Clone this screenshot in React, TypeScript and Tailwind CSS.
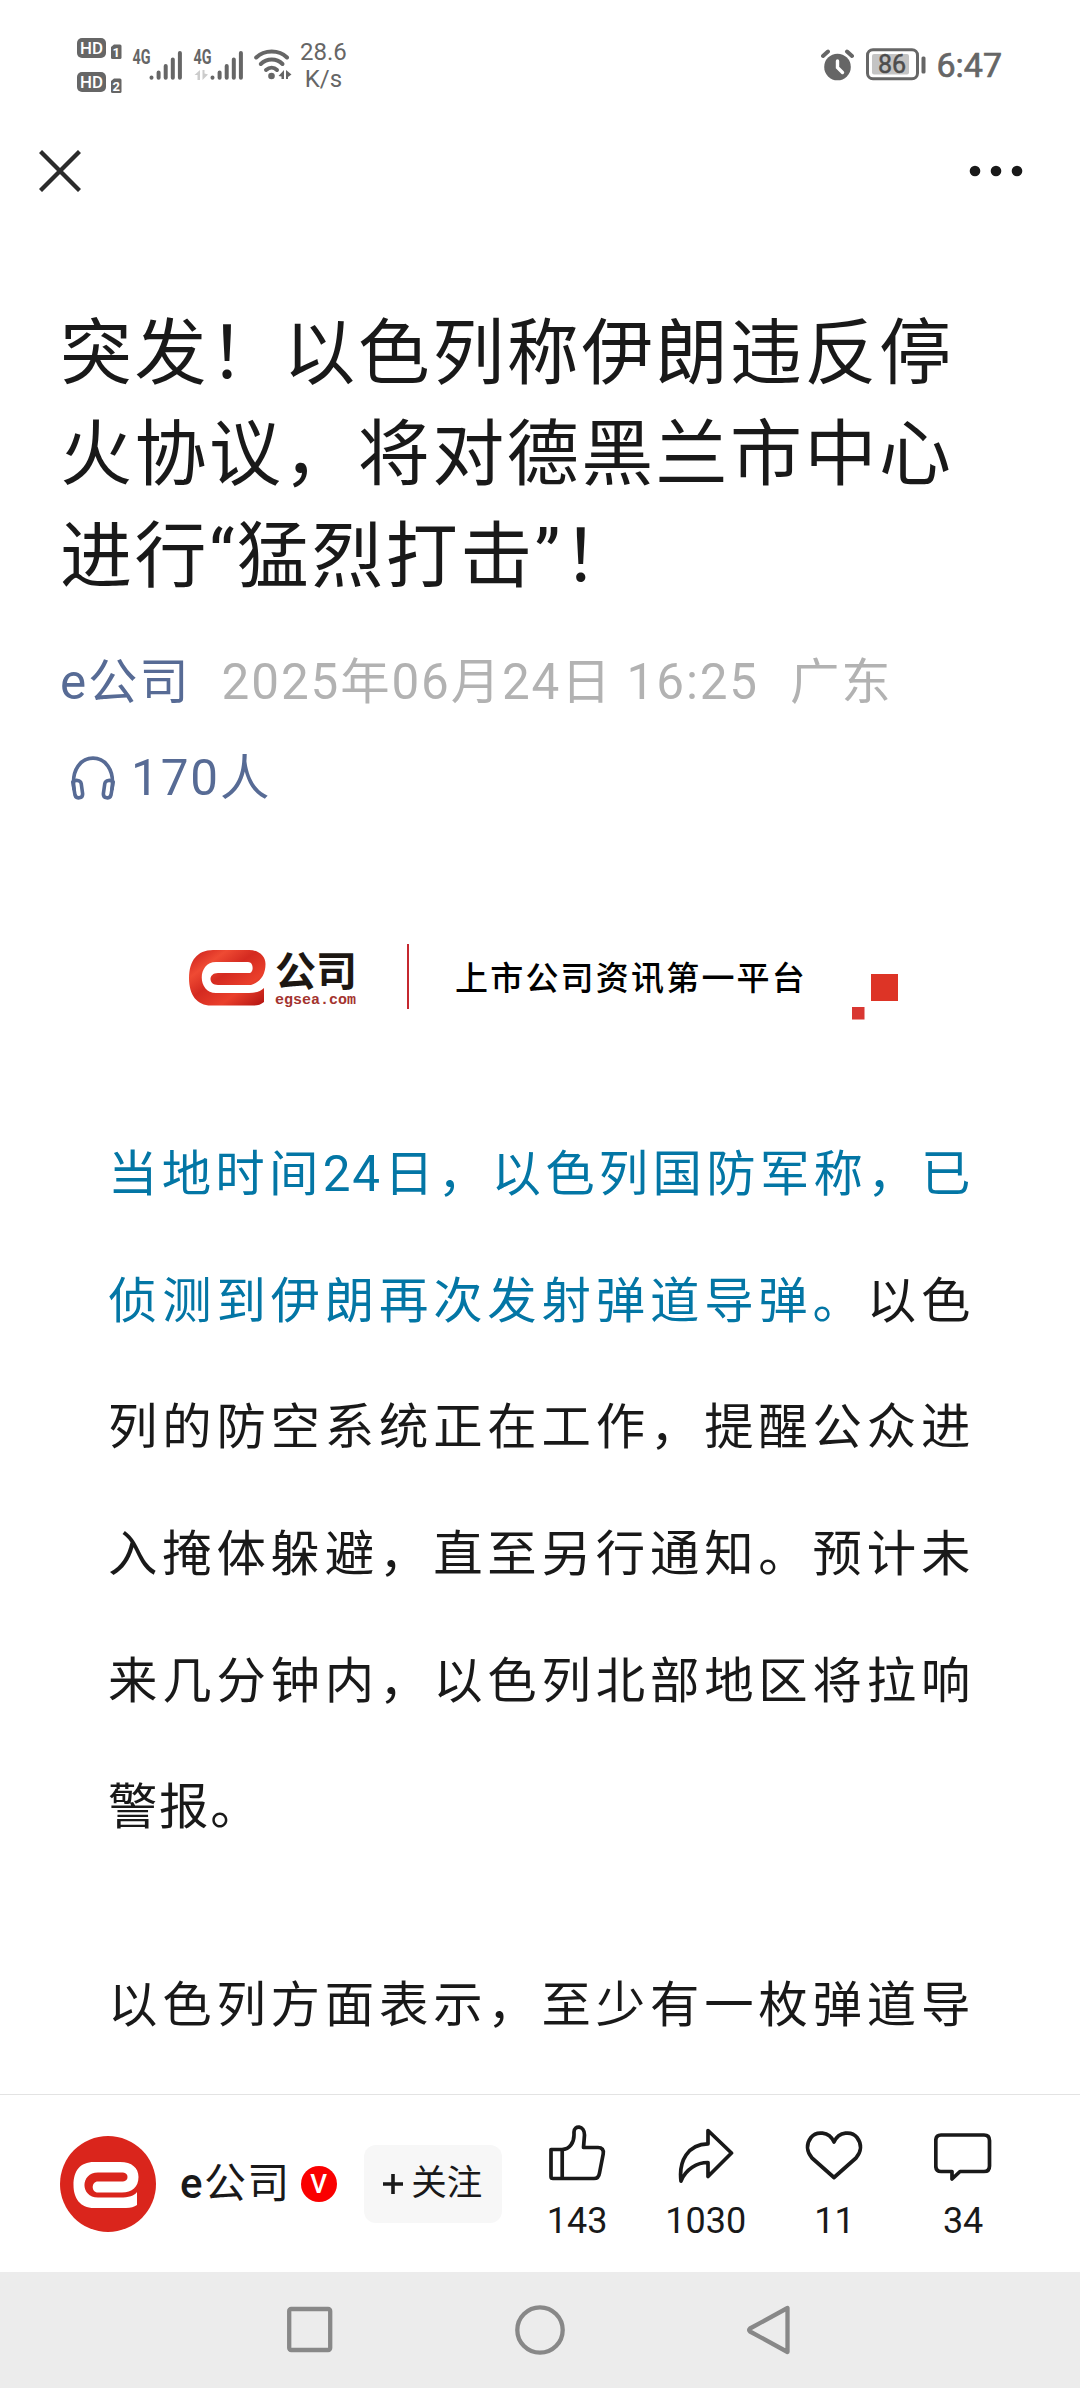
import React from "react";

type Action = {
  label: string;
  icon: React.ReactNode;
};

const HdBadge = ({ sim }: { sim: string }) => (
  <svg className="overflow-visible" width="45" height="22" viewBox="0 0 45 22">
    <rect x="0" y="0" width="29" height="20" rx="5" fill="#666" />
    <text
      x="14.5"
      y="16"
      textAnchor="middle"
      textLength="23"
      lengthAdjust="spacingAndGlyphs"
      fontSize="17"
      fontWeight="500"
      fill="#fff"
      fontFamily="Roboto, sans-serif"
    >
      HD
    </text>
    <path d="M34 9 L37 6.5 H43 Q44.5 6.5 44.5 8 V19.5 Q44.5 21 43 21 H35.5 Q34 21 34 19.5 Z" fill="#666" />
    <text
      x="39.3"
      y="18.5"
      textAnchor="middle"
      fontSize="13"
      fontWeight="700"
      fill="#fff"
      fontFamily="Roboto, sans-serif"
    >
      {sim}
    </text>
  </svg>
);

const Signal = ({ data }: { data?: boolean }) => (
  <svg className="overflow-visible" width="51" height="32" viewBox="0 0 51 32">
    <text
      x="-0.5"
      y="14.5"
      textLength="18"
      lengthAdjust="spacingAndGlyphs"
      fontSize="20"
      fontWeight="700"
      fill="#666"
      fontFamily="Roboto, sans-serif"
    >
      4G
    </text>
    {data && (
      <path d="M6 21 V31 H3.5 V26 H0.5 Z M8.5 21 H10.5 V24.5 L14 25.5 L8.5 31 Z" fill="#ccc" />
    )}
    <g stroke="#666" strokeWidth="4" strokeLinecap="round">
      <path d="M18.5 28.6 V28.8 M25.6 23.5 V28.8 M32.7 17 V28.8 M39.8 10.5 V28.8 M46.9 4 V28.8" />
    </g>
  </svg>
);

const Wifi = () => (
  <svg width="38" height="34" viewBox="0 0 38 34">
    <g fill="none" stroke="#666" strokeWidth="4" strokeLinecap="round">
      <path d="M2.2 9.5 C10.5 1.5 25 1.5 33 9.5" />
      <path d="M6.8 16 C13 10 22.5 10 28.5 16" />
      <path d="M12 22 C15.5 19 20 19 23 22" />
    </g>
    <circle cx="17.5" cy="28" r="3.3" fill="#666" />
    <path d="M30 22 V31 H27.5 V28.5 L24.5 28 Z M32 22 L37.5 26.5 L34 29 V31 H32 Z" fill="#666" />
  </svg>
);

const Alarm = () => (
  <svg width="33" height="32" viewBox="0 0 33 32">
    <circle cx="16.5" cy="18" r="13.3" fill="#666" />
    <path d="M2 7 L7 2.5 M26 2.5 L31 7" stroke="#666" strokeWidth="4" strokeLinecap="round" />
    <path d="M16.5 12 V18.5 L21.5 23.5" fill="none" stroke="#fff" strokeWidth="3.4" strokeLinecap="round" />
  </svg>
);

const Battery = () => (
  <svg width="60" height="33" viewBox="0 0 60 33">
    <rect x="1.5" y="1.8" width="50" height="29" rx="5.5" fill="none" stroke="#666" strokeWidth="3" />
    <rect x="6" y="6" width="37" height="20.5" rx="2" fill="#c4c4c4" />
    <rect x="55.5" y="8.5" width="4" height="17" rx="1.5" fill="#666" />
    <text
      x="26"
      y="25"
      textAnchor="middle"
      fontSize="25"
      fontWeight="400"
      fill="#4d4d4d"
      stroke="#4d4d4d"
      strokeWidth="0.5"
      fontFamily="Roboto, sans-serif"
    >
      86
    </text>
  </svg>
);

const StatusBar = () => {
  return (
    <div className="flex h-[129px] items-center justify-between pl-[77px] pr-[78px] text-[#666]">
      <div className="flex items-center">
        <div className="mt-0.5 flex flex-col gap-3">
          <HdBadge sim="1" />
          <HdBadge sim="2" />
        </div>
        <div className="ml-[11px] flex gap-[10px]">
          <Signal />
          <Signal data />
        </div>
        <div className="ml-[9px]">
          <Wifi />
        </div>
        <div className="ml-[8px] mt-0.5 text-center text-2xl leading-[27px]">
          <p>28.6</p>
          <p>K/s</p>
        </div>
      </div>
      <div className="flex items-center">
        <Alarm />
        <div className="ml-3">
          <Battery />
        </div>
        <span className="ml-[10px] text-[34px] leading-none [-webkit-text-stroke:0.7px_#666]">6:47</span>
      </div>
    </div>
  );
};

const Header = () => {
  return (
    <div className="flex h-[84px] items-center justify-between pl-[39px] pr-[57px]">
      <svg width="42" height="42" viewBox="0 0 42 42">
        <path d="M1.5 1.5 L40.5 40.5 M40.5 1.5 L1.5 40.5" stroke="#2b2b2b" strokeWidth="4.3" />
      </svg>
      <svg width="54" height="12" viewBox="0 0 54 12" fill="#191919">
        <circle cx="6" cy="6" r="5.3" />
        <circle cx="27" cy="6" r="5.3" />
        <circle cx="48" cy="6" r="5.3" />
      </svg>
    </div>
  );
};

const Headphones = () => (
  <svg width="44" height="44" viewBox="0 0 44 44" fill="none" stroke="#576b95" strokeWidth="3.6">
    <path d="M3.2 34 C-4 -8.5 48 -8.5 40.8 34" />
    <path d="M1.8 26 C4 23.5 9.5 24 10.2 27.5 L11.6 37.5 C12 42.5 5 43.5 4 39 Z" strokeLinejoin="round" />
    <path d="M42.2 26 C40 23.5 34.5 24 33.8 27.5 L32.4 37.5 C32 42.5 39 43.5 40 39 Z" strokeLinejoin="round" />
  </svg>
);

const Banner = () => {
  return (
    <div className="flex h-[80px] items-center pl-[129px]">
      <svg className="mt-[4px]" width="77" height="56" viewBox="0 0 77 56">
        <defs>
          <linearGradient id="brand" x1="0" y1="0" x2="1" y2="1">
            <stop offset="0" stopColor="#c81a18" />
            <stop offset="0.25" stopColor="#ef4a33" />
            <stop offset="0.45" stopColor="#d42a20" />
            <stop offset="0.7" stopColor="#ea3f2b" />
            <stop offset="1" stopColor="#b01210" />
          </linearGradient>
        </defs>
        <path
          d="M24 0 H60 C70 0 76.5 6 76.5 14 C76.5 24 72 32 62 35 H29 C19 35 19 23 29 23 H60 C65 23 65 12 59 12 H27 C8 12 8 43 27 43 H60 C67 43 72 41 75 38 V52 C72 54.5 69 55.5 65 55.5 H22 C8 55.5 0 45 0 28 C0 11 8 0 24 0 Z"
          fill="url(#brand)"
        />
      </svg>
      <div className="ml-[9px] mt-[6px] flex w-[82px] flex-col whitespace-nowrap">
        <span className="text-[41px] font-bold leading-[43px] text-[#1c1712]">公司</span>
        <span className="font-['Liberation_Mono',monospace] text-[15px] font-bold leading-[14px] text-[#a3332e]">
          egsea.com
        </span>
      </div>
      <div className="ml-[50px] h-[65px] w-[2px] bg-[#c5282f]" />
      <span className="ml-[46px] mt-[5px] text-[33px] font-medium leading-none tracking-[2.2px] text-black">
        上市公司资讯第一平台
      </span>
      <svg className="ml-[45px] mt-[41px]" width="47" height="46" viewBox="0 0 47 46">
        <rect x="19" y="0" width="27" height="27" fill="#dd3426" />
        <rect x="0" y="33" width="12.5" height="12.5" fill="#d93732" />
      </svg>
    </div>
  );
};

const Article = () => {
  return (
    <main className="h-[1881px] overflow-hidden px-[60px] pt-[90px]">
      <h1 className="whitespace-nowrap text-[72px] leading-[101.4px] tracking-[0.034em] text-[#191919]">
        突发！以色列称伊朗违反停
        <br />
        火协议，将对德黑兰市中心
        <br />
        进行“猛烈打击”！
      </h1>

      <div className="mt-[27px] text-[49.4px] leading-[96px] tracking-[0.038em]">
        <div className="flex gap-[31px] whitespace-nowrap text-[#b2b2b2]">
          <span className="text-[#576b95]">e公司</span>
          <span>2025年06月24日 16:25</span>
          <span>广东</span>
        </div>
        <div className="flex items-center pl-[11px] text-[#576b95]">
          <Headphones />
          <span className="ml-[16px]">170人</span>
        </div>
      </div>

      <div className="mt-[110px]">
        <Banner />
      </div>

      <div className="mt-[95px] px-12 text-justify text-[49.4px] leading-[126.6px] tracking-[0.034em] text-[#191919]">
        <p>
          <span className="text-[#0376a5]">当地时间24日，以色列国防军称，已侦测到伊朗再次发射弹道导弹。</span>
          以色列的防空系统正在工作，提醒公众进入掩体躲避，直至另行通知。预计未来几分钟内，以色列北部地区将拉响警报。
        </p>
        <p className="mt-[71px] [text-align-last:justify]">以色列方面表示，至少有一枚弹道导</p>
      </div>
    </main>
  );
};

const actions: Action[] = [
  {
    label: "143",
    icon: (
      <svg width="58" height="60" viewBox="0 0 58 60" fill="none" stroke="#191919" strokeWidth="3.7" strokeLinejoin="round">
        <path d="M3 26.5 H14 C22 26.5 26 19 26 12 V9 C26 2 36.5 2 36.5 12 L35.5 24.5 H50 C54 24.5 56 27 55.2 31 L51.5 50 C51 53.5 49 55.5 46 55.5 H5 Q3 55.5 3 53.5 Z" />
        <path d="M14.2 26.5 V55.5" />
      </svg>
    ),
  },
  {
    label: "1030",
    icon: (
      <svg width="58" height="60" viewBox="0 0 58 60" fill="none" stroke="#191919" strokeWidth="3.7" strokeLinejoin="round">
        <path d="M31 7.5 L54.5 30 L31 53.5 V39.5 C20 39.5 9 46 4 58 C1.5 38 11 21 31 20.8 Z" />
      </svg>
    ),
  },
  {
    label: "11",
    icon: (
      <svg width="58" height="60" viewBox="0 0 58 60" fill="none" stroke="#191919" strokeWidth="3.7" strokeLinejoin="round">
        <path d="M29 19 C24 8 11 8 6 14.5 C1 21 1.5 28.5 7 35 L29 54.5 L51 35 C56.5 28.5 57 21 52 14.5 C47 8 34 8 29 19 Z" />
      </svg>
    ),
  },
  {
    label: "34",
    icon: (
      <svg width="58" height="60" viewBox="0 0 58 60" fill="none" stroke="#191919" strokeWidth="3.7" strokeLinejoin="round">
        <path d="M7 12 H50 Q55.5 12 55.5 17.5 V43 Q55.5 48.5 50 48.5 H26 L18 56 V48.5 H7 Q1.8 48.5 1.8 43 V17.5 Q1.8 12 7 12 Z" />
      </svg>
    ),
  },
];

const BottomBar = () => {
  return (
    <div className="flex h-[178px] items-center border-t border-[#e3e3e3] pl-[60px] text-[#191919]">
      <svg width="96" height="96" viewBox="0 0 96 96">
        <circle cx="48" cy="48" r="48" fill="#da251c" />
        <path
          d="M34 26 H60 C72 26 78.5 32 78.5 41 C78.5 51 72 56.5 62 56.5 H38 C31 56.5 31 45.5 38 45.5 H63 C69 45.5 69 36.5 63 36.5 H38 C20 36.5 20 61.5 38 61.5 H60 C69 61.5 74 60 77 56 V69 C74 71 71 72 66 72 H34 C20 72 13.5 62 13.5 49 C13.5 35 20 26 34 26 Z"
          fill="#fff"
        />
      </svg>
      <span className="ml-6 text-[42px] leading-none tracking-[1.4px]">
        <span className="font-medium">e</span>公司
      </span>
      <span className="ml-[10px] flex size-9 items-center justify-center rounded-full bg-[#fa0000] text-[26px] font-medium leading-none text-white">
        V
      </span>
      <button className="ml-[27px] flex h-[78px] w-[138px] items-center justify-center gap-[8px] rounded-xl bg-[#f7f7f7] text-[35.5px] leading-none">
        <svg width="20" height="20" viewBox="0 0 20 20">
          <path d="M10 0 V20 M0 10 H20" stroke="#191919" strokeWidth="3.6" />
        </svg>
        关注
      </button>
      <div className="ml-[11px] flex">
        {actions.map((action) => (
          <div key={action.label} className="flex w-[128.7px] flex-col items-center">
            {action.icon}
            <span className="mb-[2px] mt-[16px] text-4xl leading-[44px]">{action.label}</span>
          </div>
        ))}
      </div>
    </div>
  );
};

const NavBar = () => {
  return (
    <div className="flex h-[116px] items-center justify-center gap-[182px] bg-[#ececec] pr-[3px]">
      <svg width="46" height="50" viewBox="0 0 46 50" fill="none" stroke="#888" strokeWidth="4.3">
        <rect x="2.2" y="4" width="41" height="41" rx="2" />
      </svg>
      <svg width="50" height="50" viewBox="0 0 50 50" fill="none" stroke="#888" strokeWidth="4.3">
        <circle cx="25" cy="25" r="22.7" />
      </svg>
      <svg width="44" height="50" viewBox="0 0 44 50" fill="none" stroke="#888" strokeWidth="4.3" strokeLinejoin="round">
        <path d="M40.5 3 V47 L3 26.5 Q1.5 25 3 23.5 Z" />
      </svg>
    </div>
  );
};

const App = () => {
  return (
    <div className="flex h-[2388px] w-[1080px] flex-col overflow-hidden bg-white font-[Roboto,'Noto_Sans_CJK_SC',sans-serif]">
      <StatusBar />
      <Header />
      <Article />
      <BottomBar />
      <NavBar />
    </div>
  );
};

export default App;
